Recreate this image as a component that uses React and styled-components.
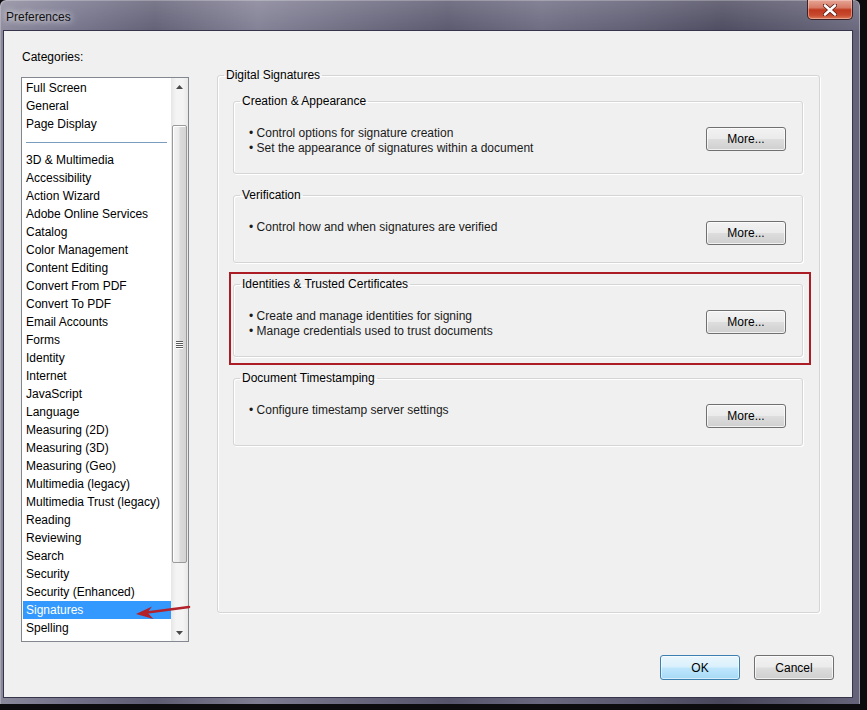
import React from 'react';
import styled, { createGlobalStyle } from 'styled-components';

const GlobalStyle = createGlobalStyle`
  html, body {
    margin: 0;
    padding: 0;
    background: #0c0c0f;
  }
  body {
    font-family: "Liberation Sans", Arial, sans-serif;
    font-size: 12px;
    color: #000;
  }
`

const Screen = styled.div`
  width: 867px;
  height: 710px;
  overflow: hidden;
  background: #0c0c0f;
`

const Window = styled.div`
  width: 860px;
  height: 704px;
  box-sizing: border-box;
  padding: 0 7px 6px 3px;
  display: flex;
  flex-direction: column;
  border-radius: 6px 6px 0 0;
  background:
    linear-gradient(180deg, rgba(255,255,255,0.18) 0px, rgba(255,255,255,0.04) 30px, rgba(0,0,0,0) 31px),
    linear-gradient(90deg, #8a889a 0%, #74728a 8%, #5e5c72 18%, #7f7d92 30%, #68667c 42%, #56546a 52%, #6a687e 63%, #5c5a70 73%, #48465b 84%, #58566b 93%, #66647a 100%);
  box-shadow: inset 1px 1px 0 rgba(255,255,255,0.25), inset -1px 0 0 rgba(255,255,255,0.35);
`

const TitleBar = styled.div`
  height: 30px;
  flex: none;
  display: flex;
  justify-content: space-between;
  align-items: flex-start;
`

const TitleText = styled.div`
  padding: 10px 0 0 3px;
  line-height: 14px;
  font-size: 12px;
  color: #111;
  text-shadow: 0 0 6px rgba(255,255,255,0.9), 0 0 10px rgba(255,255,255,0.6);
`

const CloseButton = styled.div`
  width: 46px;
  height: 20px;
  box-sizing: border-box;
  display: flex;
  align-items: center;
  justify-content: center;
  border: 1px solid #3a2226;
  border-top: none;
  border-radius: 0 0 5px 5px;
  background: linear-gradient(180deg, #e5a596 0%, #d77b66 40%, #c0391f 52%, #c84a2e 80%, #dc7a58 100%);
  box-shadow: inset 0 0 0 1px rgba(255,220,210,0.45);
  svg {
    display: block;
  }
`

const Client = styled.div`
  flex: 1;
  display: flex;
  flex-direction: column;
  background: #f0f0f0;
  border: 1px solid #36344a;
`

const Body = styled.div`
  display: flex;
  align-items: flex-start;
  padding-left: 17px;
`

const LeftColumn = styled.div`
  width: 168px;
  margin-top: 19px;
  display: flex;
  flex-direction: column;
`

const CategoriesLabel = styled.div`
  line-height: 15px;
  padding-left: 1px;
  margin-bottom: 12px;
`

const ListBox = styled.div`
  position: relative;
  height: 565px;
  box-sizing: border-box;
  border: 1px solid #828790;
  background: #fff;
  display: flex;
`

const Items = styled.div`
  flex: 1;
  display: flex;
  flex-direction: column;
  padding-top: 1px;
  overflow: hidden;
`

const Item = styled.div`
  height: 18px;
  line-height: 18px;
  margin-left: 1px;
  padding-left: 3px;
  white-space: nowrap;
  background: ${props => props.selected ? '#3399ff' : 'transparent'};
  color: ${props => props.selected ? '#fff' : '#000'};
`

const Separator = styled.div`
  height: 18px;
  display: flex;
  align-items: center;
  padding: 0 4px 0 4px;
  &::before {
    content: '';
    flex: 1;
    height: 1px;
    background: #7a9cbf;
  }
`

const ScrollBar = styled.div`
  width: 17px;
  display: flex;
  flex-direction: column;
  background: linear-gradient(90deg, #e6e6e6 0%, #f4f4f4 30%, #f4f4f4 70%, #e8e8e8 100%);
`

const ScrollArrow = styled.div`
  height: 17px;
  display: flex;
  align-items: center;
  justify-content: center;
  svg {
    display: block;
  }
`

const Track = styled.div`
  flex: 1;
  display: flex;
  flex-direction: column;
  align-items: center;
`

const Thumb = styled.div`
  width: 15px;
  box-sizing: border-box;
  border: 1px solid #9a9a9a;
  border-radius: 2px;
  background: linear-gradient(90deg, #f2f2f2 0%, #ececec 45%, #dadada 55%, #d4d4d4 100%);
  box-shadow: inset 1px 1px 0 #fff;
  display: flex;
  align-items: center;
  justify-content: center;
`

const Gripper = styled.div`
  width: 7px;
  display: flex;
  flex-direction: column;
  gap: 1px;
  span {
    height: 1px;
    background: #5a5a5a;
    box-shadow: 0 1px 0 #fff;
  }
`

const Arrow = styled.svg`
  position: absolute;
  left: 110px;
  top: 520px;
`

const RightColumn = styled.div`
  margin-left: 28px;
  margin-top: 37px;
`

const GroupBox = styled.fieldset`
  margin: 0;
  box-sizing: border-box;
  border: 1px solid #d5d5d5;
  border-radius: 3px;
  box-shadow: inset 1px 1px 0 #fff, 1px 1px 0 #fff;
  min-width: 0;
`

const OuterGroup = styled(GroupBox)`
  width: 603px;
  height: 545px;
  padding: 12px 16px 0 15px;
`

const Legend = styled.legend`
  padding: 0 2px;
  margin-left: -9px;
  line-height: 14px;
  font-size: 12px;
  color: #000;
`

const Section = styled(GroupBox)`
  padding: 0 16px 0 15px;
  margin-top: ${props => props.first ? '0px' : '14px'};
`

const Highlight = styled.div`
  position: relative;
  margin-top: 14px;
  &::after {
    content: '';
    position: absolute;
    top: -5px;
    left: -4px;
    right: -8px;
    bottom: -8px;
    border: 2px solid #ac1c24;
    pointer-events: none;
  }
`

const SectionRow = styled.div`
  display: flex;
  justify-content: space-between;
  align-items: flex-start;
  padding-bottom: 17px;
`

const Bullets = styled.ul`
  list-style: none;
  margin: 18px 0 0 0;
  padding: 0;
  li {
    line-height: 15px;
    color: #1a1a1a;
  }
`

const Button = styled.button`
  width: 80px;
  height: ${props => props.tall ? '25px' : '24px'};
  margin: 0;
  padding: 0;
  font-family: "Liberation Sans", Arial, sans-serif;
  font-size: 12px;
  color: #000;
  border: 1px solid ${props => props.primary ? '#3c7fb1' : '#707070'};
  border-radius: 3px;
  background: ${props => props.primary
    ? 'linear-gradient(180deg, #eaf6fd 0%, #d9f0fc 48%, #bee6fd 52%, #a7d9f5 100%)'
    : 'linear-gradient(180deg, #f2f2f2 0%, #ebebeb 48%, #dddddd 52%, #cfcfcf 100%)'};
  box-shadow: inset 0 0 0 1px ${props => props.primary ? 'rgba(255,255,255,0.55)' : 'rgba(255,255,255,0.7)'};
`

const MoreButton = styled(Button)`
  margin-top: 19px;
  flex: none;
`

const Footer = styled.div`
  display: flex;
  justify-content: flex-end;
  gap: 14px;
  margin-top: 13px;
  padding-right: 18px;
`

const categories = [
  "3D & Multimedia", "Accessibility", "Action Wizard", "Adobe Online Services",
  "Catalog", "Color Management", "Content Editing", "Convert From PDF",
  "Convert To PDF", "Email Accounts", "Forms", "Identity", "Internet",
  "JavaScript", "Language", "Measuring (2D)", "Measuring (3D)", "Measuring (Geo)",
  "Multimedia (legacy)", "Multimedia Trust (legacy)", "Reading", "Reviewing",
  "Search", "Security", "Security (Enhanced)", "Signatures", "Spelling"
]

const sections = [
  {
    title: "Creation & Appearance",
    lines: ["Control options for signature creation", "Set the appearance of signatures within a document"]
  },
  {
    title: "Verification",
    lines: ["Control how and when signatures are verified"]
  },
  {
    title: "Identities & Trusted Certificates",
    lines: ["Create and manage identities for signing", "Manage credentials used to trust documents"],
    highlighted: true
  },
  {
    title: "Document Timestamping",
    lines: ["Configure timestamp server settings"]
  }
]

const SectionBox = ({ section, first }) => (
  <Section first={first}>
    <Legend>{section.title}</Legend>
    <SectionRow>
      <Bullets>
        {section.lines.map(line => <li key={line}>• {line}</li>)}
      </Bullets>
      <MoreButton>More...</MoreButton>
    </SectionRow>
  </Section>
)

const App = () => {
  return (
    <Screen>
      <GlobalStyle />
      <Window>
        <TitleBar>
          <TitleText>Preferences</TitleText>
          <CloseButton>
            <svg width="14" height="12" viewBox="0 0 14 12">
              <path d="M2 1.5 L12 10.5 M12 1.5 L2 10.5" stroke="#5a1a14" strokeWidth="4.2" strokeLinecap="round" />
              <path d="M2 1.5 L12 10.5 M12 1.5 L2 10.5" stroke="#fff" strokeWidth="2.6" strokeLinecap="round" />
            </svg>
          </CloseButton>
        </TitleBar>
        <Client>
          <Body>
            <LeftColumn>
              <CategoriesLabel>Categories:</CategoriesLabel>
              <ListBox>
                <Items>
                  <Item>Full Screen</Item>
                  <Item>General</Item>
                  <Item>Page Display</Item>
                  <Separator />
                  {categories.map(name => (
                    <Item key={name} selected={name === "Signatures"}>{name}</Item>
                  ))}
                </Items>
                <ScrollBar>
                  <ScrollArrow>
                    <svg width="7" height="4" viewBox="0 0 7 4"><path d="M0 4 L3.5 0 L7 4 Z" fill="#4a4a4a" /></svg>
                  </ScrollArrow>
                  <Track>
                    <Thumb style={{ marginTop: 30, height: 438 }}>
                      <Gripper><span /><span /><span /><span /></Gripper>
                    </Thumb>
                  </Track>
                  <ScrollArrow>
                    <svg width="7" height="4" viewBox="0 0 7 4"><path d="M0 0 L7 0 L3.5 4 Z" fill="#4a4a4a" /></svg>
                  </ScrollArrow>
                </ScrollBar>
                <Arrow width="60" height="26" viewBox="0 0 60 26">
                  <path d="M15 14.5 L57 9" stroke="#b3222b" strokeWidth="2.6" strokeLinecap="round" fill="none" />
                  <path d="M4 16 L20 8.5 L15.5 14.4 L21.5 21 Z" fill="#b3222b" />
                </Arrow>
              </ListBox>
            </LeftColumn>
            <RightColumn>
              <OuterGroup>
                <Legend>Digital Signatures</Legend>
                {sections.map((section, index) => section.highlighted
                  ? <Highlight key={section.title}><SectionBox section={section} first /></Highlight>
                  : <SectionBox key={section.title} section={section} first={index === 0} />
                )}
              </OuterGroup>
            </RightColumn>
          </Body>
          <Footer>
            <Button primary tall>OK</Button>
            <Button tall>Cancel</Button>
          </Footer>
        </Client>
      </Window>
    </Screen>
  );
}

export default App;
